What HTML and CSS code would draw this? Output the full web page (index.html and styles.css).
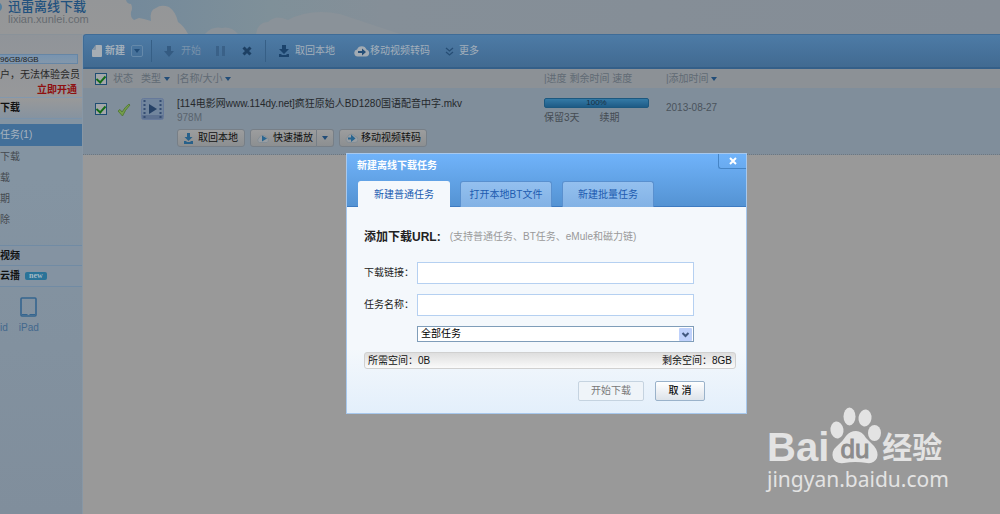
FILE: index.html
```html
<!DOCTYPE html>
<html lang="zh-CN">
<head>
<meta charset="utf-8">
<title>迅雷离线下载</title>
<link rel="stylesheet" href="styles.css">
</head>
<body>
<div class="page">
  <header class="header">
    <svg class="sky" viewBox="0 0 1000 34" preserveAspectRatio="xMinYMin slice" aria-hidden="true">
      <defs>
        <linearGradient id="skyFill" x1="0" x2="1" y1="0" y2="0">
          <stop offset="0" stop-color="#73899b"/><stop offset=".17" stop-color="#7f9099"/><stop offset=".3" stop-color="#858f98"/><stop offset=".6" stop-color="#858e97"/><stop offset="1" stop-color="#858d96"/>
        </linearGradient>
        <linearGradient id="cloudFill" x1="0" x2="0" y1="0" y2="1">
          <stop offset="0" stop-color="#949698"/><stop offset="1" stop-color="#969798"/>
        </linearGradient>
      </defs>
      <rect x="120" width="880" height="34" fill="url(#skyFill)"/>
      <path fill="url(#cloudFill)" d="M0 0H126Q127 4 131 4Q133 8 131 12Q130 17 134 20L139 18L144 19L151 21Q149 10 156 8Q161 4 169 7Q176 12 178 22Q184 26 188 34H0Z"/>
      <path fill="#8a9299" d="M205 34Q212 26 222 28Q231 26 238 34ZM256 34Q258 22 268 22Q276 14 288 20Q310 8 340 14L400 34Z"/>
      <circle cx="-3" cy="7" r="5" fill="#547f9f"/>
    </svg>
    <div class="brand">
      <span class="brand-name">迅雷离线下载</span>
      <span class="brand-url">lixian.xunlei.com</span>
    </div>
  </header>
  <div class="columns">
    <aside class="sidebar">
      <div class="account">
        <div class="quota">96GB/8GB</div>
        <p class="notice">户，无法体验会员</p>
        <a class="upgrade" href="#">立即开通</a>
      </div>
      <h2 class="side-title first">下载</h2>
      <nav class="side-nav">
        <a class="active" href="#">任务(1)</a>
        <a href="#">下载</a>
        <a href="#">载</a>
        <a href="#">期</a>
        <a href="#">除</a>
      </nav>
      <h2 class="side-title upper">视频</h2>
      <h2 class="side-title">云播 <span class="new">new</span></h2>
      <div class="apps">
        <a class="cut" href="#">id</a>
        <a class="ipad" href="#">
          <svg width="17" height="20" viewBox="0 0 17 20" aria-hidden="true"><rect x="1" y="1" width="15" height="18" rx="1" fill="none" stroke="#35658f" stroke-width="1.6"/><path d="M2 17.5H7.5M9.5 17.5H15" stroke="#35658f"/></svg>
          iPad
        </a>
      </div>
    </aside>
    <main class="main">
      <div class="toolbar">
        <button class="tool new-task">
          <svg width="12" height="14" viewBox="0 0 12 14" aria-hidden="true"><path d="M5 1H10Q11 1 11 2V12Q11 13 10 13H2Q1 13 1 12V6Z" fill="#a6adb4"/><path d="M5 1V5Q5 6 4 6H1Z" fill="#8495a5"/></svg>
          新建</button>
        <button class="drop" aria-label="更多新建方式"><i class="caret"></i></button>
        <span class="divider"></span>
        <button class="tool start">
          <svg width="10" height="11" viewBox="0 0 10 11" aria-hidden="true"><path d="M3 0H7V5H10L5 11L0 5H3Z" fill="#345b82"/></svg>
          开始</button>
        <button class="tool pause" aria-label="暂停"><svg width="9" height="10" viewBox="0 0 9 10"><path d="M0 0H3V10H0ZM6 0H9V10H6Z" fill="#3a6188"/></svg></button>
        <button class="tool remove" aria-label="删除"><svg width="10" height="10" viewBox="0 0 10 10"><path d="M1.5 1.5L8.500 8.500M8.500 1.500L1.500 8.500" stroke="#1d4064" stroke-width="3"/></svg></button>
        <span class="divider"></span>
        <button class="tool fetch">
          <svg width="12" height="12" viewBox="0 0 12 12" aria-hidden="true"><path d="M4 0H8V4H11L6 9L1 4H4ZM1 9H3L4 10H8L9 9H11V12H1Z" fill="#1b436c"/></svg>
          取回本地</button>
        <button class="tool transcode">
          <svg width="16" height="12" viewBox="0 0 16 12" aria-hidden="true"><path d="M4 11.500A3.500 3.500 0 0 1 3 4.600A5 5 0 0 1 12.500 4.600A3.500 3.500 0 0 1 12 11.500Z" fill="#a3abb3"/><path d="M4 6H8V3.500L12 7L8 10.500V8H4Z" fill="#254e77"/></svg>
          移动视频转码</button>
        <button class="tool more">
          <svg width="9" height="9" viewBox="0 0 9 9" aria-hidden="true"><path d="M1 1L4.500 4L8 1M1 5L4.500 8L8 5" fill="none" stroke="#274e75" stroke-width="1.300"/></svg>
          更多</button>
      </div>
      <div class="row head">
        <input class="tick" type="checkbox" checked aria-label="全选">
        <span class="c-state">状态</span>
        <span class="c-type">类型 <i class="caret"></i></span>
        <span class="c-name">|名称/大小 <i class="caret"></i></span>
        <span class="c-progress">|进度 剩余时间 速度</span>
        <span class="c-date">|添加时间 <i class="caret"></i></span>
      </div>
      <div class="row task">
        <input class="tick" type="checkbox" checked aria-label="选择任务">
        <span class="c-state"><svg width="14" height="14" viewBox="0 0 14 14" aria-hidden="true"><path d="M1 8L3 6.500L5 9Q8 4 12 1L13 2Q8 7 5.500 13Z" fill="#759d4b" stroke="#4b752e" stroke-width=".8"/></svg></span>
        <span class="c-type"><svg width="23" height="22" viewBox="0 0 23 22" aria-hidden="true"><rect x=".5" y=".5" width="22" height="21" rx="2" fill="#71859d" stroke="#66799a"/><path d="M1 17H22V20Q22 21 21 21H2Q1 21 1 20Z" fill="#5d7190"/><path d="M3.500 2V20M19.500 2V20" stroke="#354d72" stroke-width="2" stroke-dasharray="2 2"/><path d="M8 6L16 11L8 16Z" fill="#254166"/></svg></span>
        <div class="c-name">
          <span class="file">[114电影网www.114dy.net]疯狂原始人BD1280国语配音中字.mkv</span>
          <span class="size">978M</span>
          <div class="actions">
            <button class="act"><svg width="9" height="11" viewBox="0 0 9 11" aria-hidden="true"><path d="M3 0H6V4H8.500L4.500 8L.5 4H3ZM0 8H2L3 9H6L7 8H9V11H0Z" fill="#28618a"/></svg>取回本地</button>
            <div class="split">
              <button class="act play"><svg width="14" height="9" viewBox="0 0 14 9" aria-hidden="true"><path d="M3.500 8.500A2.500 2.500 0 0 1 3 4A4 4 0 0 1 10 3A3 3 0 0 1 11 8.500Z" fill="#999ea3" stroke="#808b94" stroke-width=".8"/><path d="M6 1.500L11 4.500L6 7.500Z" fill="#286590"/></svg>快速播放</button>
              <button class="act arrow" aria-label="播放选项"><i class="caret"></i></button>
            </div>
            <button class="act cloud"><svg width="13" height="10" viewBox="0 0 13 10" aria-hidden="true"><path d="M3.500 9.500A3 3 0 0 1 2.500 4A4 4 0 0 1 10 3.500A3 3 0 0 1 10 9.500Z" fill="#999ea3" stroke="#808b94" stroke-width=".8"/><path d="M3 4.500H6V1.500L10.500 5.500L6 9V6.500H3Z" fill="#286590"/></svg>移动视频转码</button>
          </div>
        </div>
        <div class="c-progress">
          <div class="bar">100%</div>
          <div class="keep"><span>保留3天</span><a href="#">续期</a></div>
        </div>
        <span class="c-date">2013-08-27</span>
      </div>
    </main>
  </div>

  <section class="dialog" role="dialog" aria-labelledby="dialog-title">
    <div class="dialog-head">
      <h1 id="dialog-title">新建离线下载任务</h1>
      <button class="close" aria-label="关闭"><svg width="8" height="8" viewBox="0 0 8 8"><path d="M1 1L7 7M7 1L1 7" stroke="#fff" stroke-width="2"/></svg></button>
      <div class="tabs">
        <button class="tab current">新建普通任务</button>
        <button class="tab">打开本地BT文件</button>
        <button class="tab">新建批量任务</button>
      </div>
    </div>
    <form class="dialog-body">
      <p class="lead"><strong>添加下载URL:</strong><span>(支持普通任务、BT任务、eMule和磁力链)</span></p>
      <div class="field"><label for="url">下载链接：</label><input id="url" type="text"></div>
      <div class="field"><label for="name">任务名称：</label><input id="name" type="text"></div>
      <div class="field pick">
        <select id="group" aria-label="任务分组"><option>全部任务</option></select>
        <svg class="pick-arrow" width="13" height="13" viewBox="0 0 13 13" aria-hidden="true"><rect width="13" height="13" rx="1" fill="#bfd1fb"/><path d="M3.500 5L6.500 8L9.500 5" fill="none" stroke="#42597f" stroke-width="2"/></svg>
      </div>
      <div class="space"><span>所需空间：0B</span><span>剩余空间：8GB</span></div>
      <div class="buttons">
        <button class="btn" type="button" disabled>开始下载</button>
        <button class="btn cancel" type="button">取 消</button>
      </div>
    </form>
  </section>

  <div class="watermark">
    <div class="mark">
      <span class="bai">Bai</span>
      <svg class="paw" width="52" height="58" viewBox="0 0 52 58" aria-hidden="true">
        <g fill="#e3e3e3"><ellipse cx="8" cy="23" rx="6.500" ry="8.500" transform="rotate(-8 8 23)"/><ellipse cx="20.500" cy="9.500" rx="6" ry="9"/><ellipse cx="36" cy="11" rx="6.500" ry="8.500" transform="rotate(8 36 11)"/><ellipse cx="45.500" cy="26" rx="6.500" ry="8"/><path d="M27 24Q33 24 37 31Q41 35 45 39Q50 45 48 51Q45 57 38 56Q26 54 15 56Q6 57 4 51Q2 44 8 39Q14 34 17 29Q21 24 27 24Z"/></g>
        <text class="du" x="26" y="51" text-anchor="middle">du</text>
      </svg>
      <span class="jingyan">经验</span>
    </div>
    <div class="site">jingyan.baidu.com</div>
  </div>
</div>
</body>
</html>
```
FILE: styles.css
```css
* { box-sizing: border-box; }
body {
  margin: 0;
  background: #999;
  color: #222;
  font: 10px/14px "Liberation Sans", "Noto Sans CJK SC", sans-serif;
}
button, input, select { font: inherit; color: inherit; margin: 0; }
button { padding: 0; border: 0; background: none; white-space: nowrap; }
a { color: inherit; text-decoration: none; }
h1, h2, p { margin: 0; font-size: inherit; }
svg { display: block; flex: none; }

.page { position: relative; min-height: 100vh; display: flex; flex-direction: column; overflow: hidden; }
.header { position: relative; height: 34px; background: #969798; }
.sky { position: absolute; inset: 0; width: 100%; height: 34px; }
.brand { position: relative; display: flex; flex-direction: column; padding-left: 8px; }
.brand-name { font-size: 13px; line-height: 13px; font-weight: 500; color: #21517e; }
.brand-url { font-size: 11px; line-height: 12px; color: #666b70; }

.columns { flex: 1; display: flex; }
.sidebar { width: 83px; flex: none; border-right: 1px solid #8897a5; background: linear-gradient(#8494a2 30%, #808e9c); overflow: hidden; }
.account {
  display: flex; flex-direction: column; height: 64px; padding-top: 19px;
  border-top: 1px solid #8a9299; border-bottom: 1px solid #8298ae;
  background: linear-gradient(#909499, #97989a);
}
.quota { height: 10px; margin-right: 4px; border: 1px solid #6686a5; border-left: 0; background: linear-gradient(#7894b0, #8397ab); font-size: 8px; line-height: 9px; color: #222; }
.notice { margin-top: 3px; line-height: 16px; white-space: nowrap; color: #292929; }
.upgrade { align-self: flex-end; margin-right: 5px; line-height: 14px; font-weight: bold; color: #8f1010; }
.side-title {
  display: flex; align-items: center; gap: 5px; height: 21px;
  border-bottom: 1px solid #718ba4; font-weight: bold; color: #111; background: #8493a2;
}
.side-title.first { border-color: #7b93aa; background: linear-gradient(#999, #8693a0); }
.side-title.upper { border-top: 1px solid #718ba4; }
.side-nav { display: flex; flex-direction: column; margin: 5px 0 15px; }
.side-nav a { height: 21px; line-height: 21px; color: #444a50; }
.side-nav .active { height: 22px; line-height: 22px; background: #426f99; color: #a7b3bf; }
.new { height: 8px; padding: 0 4px; border-radius: 2px; background: #2a7398; color: #a5bac5; font: bold 8px/7px "Liberation Serif", serif; }
.apps { display: flex; align-items: flex-end; gap: 11px; padding-top: 10px; color: #42688d; }
.ipad { display: flex; flex-direction: column; align-items: center; gap: 4px; }

.main { flex: 1; min-width: 0; }
.toolbar {
  display: flex; align-items: center; height: 35px; padding-left: 7px;
  border: 1px solid #3f6c97; border-bottom: 2px solid #345f88; border-right: 0; border-top-left-radius: 3px;
  background: linear-gradient(#4d7ba6, #416a91); color: #a3afba;
}
.tool { display: flex; align-items: center; gap: 2px; }
.new-task { font-weight: bold; }
.drop { display: grid; place-items: center; width: 12px; height: 12px; margin: 0 8px 0 6px; border: 1px solid #6589aa; border-radius: 2px; }
.divider { width: 1px; height: 22px; background: #365f86; }
.start { gap: 7px; margin-left: 12px; color: #7892ab; }
.pause { margin-left: 15px; }
.remove { margin: 0 13px 0 17px; }
.fetch { gap: 5px; margin-left: 12px; }
.transcode { gap: 0; margin-left: 19px; }
.more { gap: 5px; margin-left: 15px; }
.caret { display: inline-block; border: 3px solid transparent; border-top: 4px solid #224d78; border-bottom: 0; vertical-align: 1px; }

.row { display: grid; grid-template-columns: 12px 26px 36px 1fr 122px 334px; padding-left: 12px; }
.row .c-state { margin-left: 6px; }
.head { align-items: center; height: 19px; background: #8c9196; color: #606a74; white-space: nowrap; }
.task { height: 67px; padding-top: 10px; border-bottom: 1px dotted #6d7780; background: #808e9b; }
.tick { appearance: none; display: grid; justify-items: center; width: 12px; height: 12px; border: 1px solid #1e4d73; background: #a3a6a9; }
.tick:checked::before { content: ""; width: 4px; height: 7px; border: solid #136c17; border-width: 0 2px 2px 0; transform: rotate(42deg); }
.task .tick { margin-top: 5px; }
.task .c-state { padding-top: 5px; margin-left: 10px; }
.c-type { margin-left: 8px; }
.c-name { display: flex; flex-direction: column; margin-left: 8px; white-space: nowrap; }
.head .c-name { display: block; }
.file { line-height: 12px; color: #25282b; }
.size { line-height: 16px; color: #59636d; }
.actions { display: flex; gap: 5px; margin-top: 3px; }
.act {
  display: flex; align-items: center; gap: 5px; height: 18px; padding: 0 6px;
  border: 1px solid #777f87; border-radius: 3px; background: linear-gradient(#9c9d9e, #8c8f91); color: #111;
}
.split { display: flex; }
.play { gap: 3px; padding: 0 3px 0 5px; border-radius: 3px 0 0 3px; }
.arrow { padding: 0 5px; border-left: 0; border-radius: 0 3px 3px 0; }
.cloud { gap: 3px; padding: 0 5px; }
.bar { width: 105px; height: 10px; border: 1px solid #1c587f; border-radius: 2px; background: linear-gradient(#347aa6, #1e5b86); font-size: 8px; line-height: 8px; text-align: center; color: #182e40; }
.keep { display: flex; gap: 20px; margin-top: 3px; color: #454c53; }
.task .c-date { padding-top: 3px; color: #4a535b; }

.dialog {
  position: absolute; left: 346px; top: 153px; width: 401px;
  border: 1px solid #a7c8ed; background: linear-gradient(#f4f8fc 75%, #e3effb);
}
.dialog-head { position: relative; padding: 5px 10px 0; border-bottom: 1px solid #3d7bc2; background: linear-gradient(#70b3fa, #5493d3); }
.dialog-head h1 { line-height: 14px; font-weight: bold; color: #fff; }
.close { position: absolute; top: 0; right: 0; display: grid; place-items: center; width: 28px; height: 15px; border: 1px solid #4685c6; border-top: 0; border-right: 0; border-bottom-left-radius: 3px; }
.tabs { display: flex; gap: 10px; margin: 8px 0 -1px 1px; }
.tab { width: 92px; height: 26px; border: 1px solid #5990cf; border-bottom: 0; border-radius: 3px 3px 0 0; background: linear-gradient(#94c0ef, #82b2e5); color: #205bb0; }
.tab.current { border-color: #f4f8fc; background: #f4f8fc; }
.dialog-body { padding: 20px 10px 12px 17px; color: #222; }
.lead { display: flex; align-items: center; gap: 9px; height: 20px; color: #999; }
.lead strong { font-size: 12px; color: #222; }
.field { display: flex; align-items: center; margin: 0 42px 10px 0; }
.lead + .field { margin-top: 15px; }
.field label { width: 53px; flex: none; }
.field input { flex: 1; min-width: 0; height: 22px; border: 1px solid #b5d0f1; background: #fff; }
.pick { position: relative; padding-left: 53px; }
.field select { appearance: none; flex: 1; height: 16px; padding: 0 3px; border: 1px solid #7f9db9; border-radius: 0; background: #fff; color: #000; }
.pick-arrow { position: absolute; right: 2px; pointer-events: none; }
.space { display: flex; justify-content: space-between; height: 17px; padding: 0 3px; border: 1px solid #d0d0d0; border-radius: 3px; background: linear-gradient(#dedede, #fafafa); line-height: 15px; color: #111; }
.buttons { display: flex; justify-content: flex-end; gap: 11px; margin: 12px 31px 0 0; }
.btn { width: 66px; height: 20px; border: 1px solid #c5d3e0; border-radius: 2px; background: #eff4f9; color: #777; }
.cancel { width: 50px; border-color: #9ab2ca; background: linear-gradient(#fff, #dde3ea); color: #111; font-weight: 500; }

.watermark { position: absolute; left: 767px; top: 406px; color: #e3e3e3; }
.mark { display: flex; align-items: flex-end; height: 60px; }
.bai { font-size: 40px; line-height: 38px; font-weight: bold; }
.du { font: 26px "Liberation Sans", sans-serif; fill: #8c8c8c; stroke: #8c8c8c; }
.paw { margin-bottom: 1px; }
.jingyan { margin-left: 1px; font-size: 30px; line-height: 36px; font-weight: bold; }
.site { font: 21px/26px "Noto Sans", sans-serif; }
```
